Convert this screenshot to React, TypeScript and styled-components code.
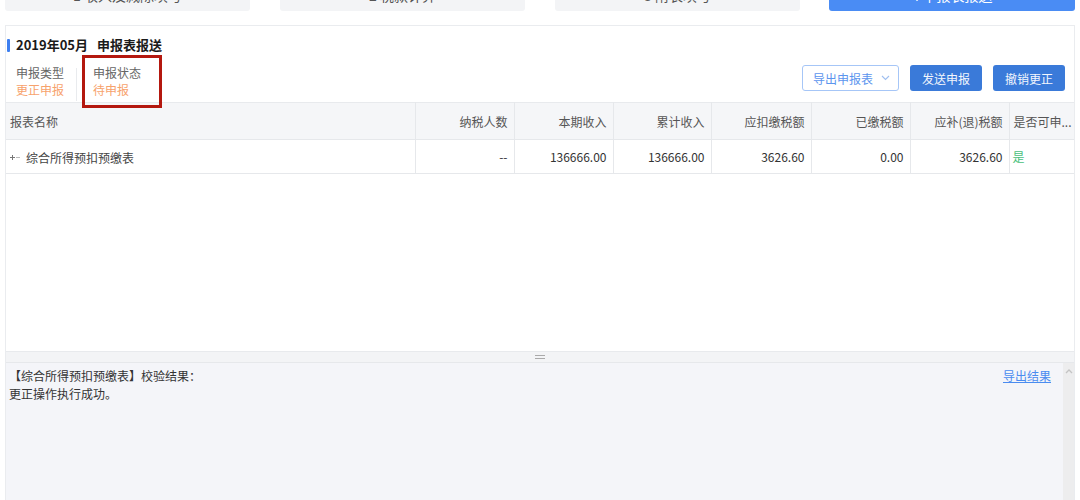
import styled, { createGlobalStyle } from "styled-components";

const GlobalStyle = createGlobalStyle`
  html, body {
    margin: 0;
    padding: 0;
    background: #fff;
    overflow: hidden;
  }
  body {
    font-family: "Noto Sans CJK SC", "Noto Sans", sans-serif;
    color: #333;
  }
  * { box-sizing: border-box; }
`;

type Column = {
  key: string;
  title: string;
  width?: number;
  align: "left" | "right";
};

const columns: Column[] = [
  { key: "name", title: "报表名称", width: 409, align: "left" },
  { key: "people", title: "纳税人数", width: 99, align: "right" },
  { key: "income", title: "本期收入", width: 99, align: "right" },
  { key: "total", title: "累计收入", width: 98, align: "right" },
  { key: "withhold", title: "应扣缴税额", width: 100, align: "right" },
  { key: "paid", title: "已缴税额", width: 99, align: "right" },
  { key: "refund", title: "应补(退)税额", width: 99, align: "right" },
  { key: "ok", title: "是否可申...", align: "left" },
];

const row = {
  name: "综合所得预扣预缴表",
  people: "--",
  income: "136666.00",
  total: "136666.00",
  withhold: "3626.60",
  paid: "0.00",
  refund: "3626.60",
};

const steps = ["1 收入及减除填写", "2 税款计算", "3 附表填写", "4 申报表报送"];

export default function App() {
  return (
    <Page>
      <GlobalStyle />
      <Steps>
        {steps.map((s, i) => (
          <Step key={s} $active={i === steps.length - 1}>
            <StepText>{s}</StepText>
          </Step>
        ))}
      </Steps>

      <Card>
        <TitleRow>
          <TitleBar />
          <Title>
            2019年05月<TitleGap />申报表报送
          </Title>
        </TitleRow>

        <Toolbar>
          <Meta>
            <MetaItem $first>
              <MetaLabel>申报类型</MetaLabel>
              <MetaValue>更正申报</MetaValue>
            </MetaItem>
            <Divider />
            <MetaItem>
              <MetaLabel>申报状态</MetaLabel>
              <MetaValue>待申报</MetaValue>
            </MetaItem>
          </Meta>
          <Actions>
            <OutlineButton type="button">
              导出申报表
              <svg width="9" height="6" viewBox="0 0 9 6">
                <path d="M1 1l3.5 3.5L8 1" fill="none" stroke="#9fbff0" strokeWidth="1.1" />
              </svg>
            </OutlineButton>
            <PrimaryButton type="button">发送申报</PrimaryButton>
            <PrimaryButton type="button">撤销更正</PrimaryButton>
          </Actions>
        </Toolbar>

        <TableArea>
          <Table>
            <colgroup>
              {columns.map((c) => (
                <col key={c.key} style={c.width ? { width: c.width } : undefined} />
              ))}
            </colgroup>
            <thead>
              <tr>
                {columns.map((c) => (
                  <Th key={c.key} $align={c.align}>
                    {c.title}
                  </Th>
                ))}
              </tr>
            </thead>
            <tbody>
              <tr>
                <Td $align="left">
                  <NameCell>
                    <svg width="11" height="9" viewBox="0 0 11 9">
                      <path d="M1 4.5h5M3.5 2v5" stroke="#777" strokeWidth="1" />
                      <path d="M7 4.5h4" stroke="#bbb" strokeWidth="1" />
                    </svg>
                    {row.name}
                  </NameCell>
                </Td>
                <Td $align="right">{row.people}</Td>
                <Td $align="right">{row.income}</Td>
                <Td $align="right">{row.total}</Td>
                <Td $align="right">{row.withhold}</Td>
                <Td $align="right">{row.paid}</Td>
                <Td $align="right">{row.refund}</Td>
                <Td $align="left">
                  <Yes>是</Yes>
                </Td>
              </tr>
            </tbody>
          </Table>
        </TableArea>

        <Splitter>
          <Grip />
        </Splitter>

        <ResultPanel>
          <ResultBody>
            <Messages>
              <div>【综合所得预扣预缴表】校验结果：</div>
              <div>更正操作执行成功。</div>
            </Messages>
            <ExportLink href="#">导出结果</ExportLink>
          </ResultBody>
          <Scrollbar>
            <svg width="8" height="5" viewBox="0 0 8 5">
              <path d="M1 4l3-3 3 3" fill="none" stroke="#c4c4c4" strokeWidth="1.3" />
            </svg>
          </Scrollbar>
        </ResultPanel>
      </Card>

      <Highlight />
    </Page>
  );
}

const Page = styled.div`
  position: relative;
  height: 500px;
  padding: 0 5px;
  overflow: hidden;
`;

const Steps = styled.div`
  display: grid;
  grid-template-columns: repeat(4, 245px);
  column-gap: 30px;
  height: 11px;
`;

const Step = styled.div<{ $active?: boolean }>`
  height: 11px;
  overflow: hidden;
  border-radius: 0 0 3px 3px;
  background: ${({ $active }) => ($active ? "#4a8cf4" : "#f3f4f6")};
  color: ${({ $active }) => ($active ? "#ffffff" : "#555")};
  ${({ $active }) => ($active ? "margin-left: -1px;" : "")}
`;

const StepText = styled.div`
  margin-top: -19px;
  height: 28px;
  line-height: 28px;
  text-align: center;
  font-size: 14px;
`;

const Card = styled.div`
  margin-top: 14px;
  border: 1px solid #eaecef;
  height: 480px;
  display: flex;
  flex-direction: column;
`;

const TitleRow = styled.div`
  display: flex;
  align-items: center;
  gap: 6px;
  padding: 12px 0 0 1px;
  height: 26px;
`;

const TitleBar = styled.span`
  width: 3px;
  height: 13px;
  background: #3d7ff0;
  border-radius: 1px;
`;

const Title = styled.h2`
  display: flex;
  align-items: center;
  margin: 0;
  font-size: 13px;
  line-height: 14px;
  font-weight: 700;
  color: #1a1a1a;
`;

const TitleGap = styled.span`
  width: 9px;
`;

const Toolbar = styled.div`
  display: flex;
  justify-content: space-between;
  align-items: flex-start;
  height: 40px;
  margin-top: 10px;
  padding-right: 9px;
`;

const Meta = styled.div`
  display: flex;
  padding-left: 10px;
  height: 40px;
`;

const MetaItem = styled.div<{ $first?: boolean }>`
  display: flex;
  flex-direction: column;
  padding-top: 2px;
  width: ${({ $first }) => ($first ? "60px" : "auto")};
  padding-left: ${({ $first }) => ($first ? "0" : "16px")};
`;

const MetaLabel = styled.span`
  font-size: 12px;
  line-height: 17px;
  color: #666;
`;

const MetaValue = styled.span`
  font-size: 12px;
  line-height: 17px;
  color: #f7a26c;
`;

const Divider = styled.span`
  width: 1px;
  margin-top: 6px;
  height: 33px;
  background: #e9ebee;
`;

const Actions = styled.div`
  display: flex;
  gap: 11px;
  padding-top: 3px;
`;

const OutlineButton = styled.button`
  display: inline-flex;
  align-items: center;
  justify-content: space-between;
  width: 97px;
  height: 26px;
  padding: 0 8px 0 10px;
  border: 1px solid #a6c6f7;
  border-radius: 3px;
  background: #fff;
  color: #5c95ee;
  font-family: inherit;
  font-size: 12px;
  cursor: pointer;
`;

const PrimaryButton = styled.button`
  width: 72px;
  height: 26px;
  border: none;
  border-radius: 3px;
  background: #3a7ad9;
  color: #f2f6fd;
  font-family: inherit;
  font-size: 12px;
  cursor: pointer;
`;

const TableArea = styled.div`
  height: 250px;
  border-bottom: 1px solid #e8eaed;
`;

const Table = styled.table`
  width: 100%;
  table-layout: fixed;
  border-collapse: collapse;
  font-size: 12px;
`;

const Th = styled.th<{ $align: "left" | "right" }>`
  height: 37px;
  padding: 0 ${({ $align }) => ($align === "right" ? "6px" : "4px")} 0 4px;
  background: #f5f6f8;
  border-top: 1px solid #e8eaed;
  border-bottom: 1px solid #e6e8eb;
  border-right: 1px solid #e6e8eb;
  text-align: ${({ $align }) => $align};
  font-weight: 400;
  color: #555;
  white-space: nowrap;
  overflow: hidden;

  &:last-child {
    border-right: none;
  }
`;

const Td = styled.td<{ $align: "left" | "right" }>`
  height: 34px;
  padding: 0 ${({ $align }) => ($align === "right" ? "6px" : "3px")} 0 3px;
  border-bottom: 1px solid #e6e8eb;
  border-right: 1px solid #e6e8eb;
  text-align: ${({ $align }) => $align};
  color: #333;
  white-space: nowrap;

  &:last-child {
    border-right: none;
  }
`;

const NameCell = styled.span`
  display: inline-flex;
  align-items: center;
  gap: 6px;
  color: #444;
`;

const Yes = styled.span`
  color: #48c07a;
`;

const Splitter = styled.div`
  height: 11px;
  background: #f3f4f6;
  border-bottom: 1px solid #e6e8eb;
  display: flex;
  align-items: center;
  justify-content: center;
`;

const Grip = styled.span`
  width: 10px;
  height: 4px;
  border-top: 1px solid #aaa;
  border-bottom: 1px solid #aaa;
`;

const ResultPanel = styled.div`
  flex: 1;
  display: flex;
  background: #f4f5f9;
`;

const ResultBody = styled.div`
  flex: 1;
  display: flex;
  justify-content: space-between;
  align-items: flex-start;
  padding: 4px 12px 0 3px;
`;

const Messages = styled.div`
  font-size: 12px;
  line-height: 18px;
  color: #333;
`;

const ExportLink = styled.a`
  font-size: 12px;
  line-height: 18px;
  color: #4a8cf0;
  text-decoration: underline;
`;

const Scrollbar = styled.div`
  width: 11px;
  background: #ededee;
  display: flex;
  justify-content: center;
  padding-top: 6px;
`;

const Highlight = styled.div`
  position: absolute;
  left: 82px;
  top: 55px;
  width: 80px;
  height: 53px;
  border: 3px solid #b4180f;
  pointer-events: none;
`;
